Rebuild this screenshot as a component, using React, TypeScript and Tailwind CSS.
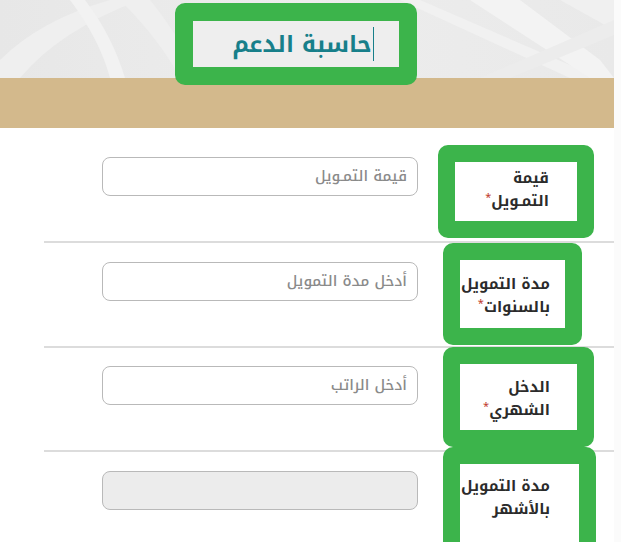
import React from "react";

const font = { fontFamily: '"Noto Kufi Arabic","Noto Sans Arabic","DejaVu Sans",sans-serif' };

function Label({ lines, star, className, pt }: { lines: string[]; star?: boolean; className: string; pt: string }) {
  return (
    <div className={`relative z-10 shrink-0 rounded-[10px] border-[17px] border-[#3cb44b] bg-white ${className}`}>
      <div dir="rtl" className={`flex flex-col text-right text-[15px] font-bold leading-[23px] text-[#2b2b2b] whitespace-nowrap ${pt}`}>
        {lines.map((l, i) => (
          <span key={i}>
            {l}
            {star && i === lines.length - 1 ? <sup className="text-[11px] text-[#c0392b] font-normal">*</sup> : null}
          </span>
        ))}
      </div>
    </div>
  );
}

function Field({ placeholder, disabled, mt }: { placeholder?: string; disabled?: boolean; mt: string }) {
  return (
    <div
      dir="rtl"
      className={`ml-[58px] ${mt} h-[39px] w-[316px] shrink-0 rounded-[8px] border border-[#b9b9b9] ${disabled ? "bg-[#ececec]" : "bg-white"} flex items-center pr-[10px] text-[15px] font-medium text-[#8a8a8a]`}
    >
      {placeholder}
    </div>
  );
}

export default function App() {
  return (
    <div className="w-[621px] h-[542px] overflow-hidden bg-[#fbfbfb]" style={font}>
      <div className="w-[614px] bg-white h-full">
        {/* header */}
        <div className="relative h-[78px] bg-[#e9e9e9] flex justify-start">
          <svg className="absolute inset-0" width="614" height="78" viewBox="0 0 614 78">
            <defs>
              <linearGradient id="g1" x1="0" y1="0" x2="1" y2="0">
                <stop offset="0" stopColor="#e7e7e7" />
                <stop offset="0.5" stopColor="#ededed" />
                <stop offset="1" stopColor="#e9e9e9" />
              </linearGradient>
            </defs>
            <rect width="614" height="78" fill="url(#g1)" />
            <path d="M0 60 Q40 20 110 0 L140 0 Q60 30 20 78 L0 78 Z" fill="#efefef" />
            <path d="M70 0 Q100 40 110 78 L125 78 Q112 35 85 0 Z" fill="#f2f2f2" />
            <path d="M120 0 Q160 40 180 78 L200 78 Q175 30 150 0 Z" fill="#efefef" />
            <path d="M420 0 L600 78 L570 78 L400 0 Z" fill="#f1f1f1" />
            <path d="M470 0 L520 0 L600 60 L614 78 L590 78 Z" fill="#f3f3f3" />
            <path d="M560 0 L614 0 L614 30 Z" fill="#f0f0f0" />
            <path d="M480 78 L614 20 L614 35 L510 78 Z" fill="#ececec" />
          </svg>
          <div className="relative z-10 ml-[175px] mt-[3px] h-[82px] w-[242px] rounded-[10px] border-[18px] border-[#3cb44b] bg-[#eeeeee] flex items-center justify-center">
            <div className="flex items-center pl-[14px]">
              <span dir="rtl" className="text-[23px] font-bold text-[#177f8a] leading-none">حاسبة الدعم</span>
              <span className="ml-[1px] h-[34px] w-[1px] bg-[#177f8a]" />
            </div>
          </div>
        </div>
        <div className="h-[50px] bg-[#d3b98c]" />

        {/* rows */}
        <div className="ml-[44px]">
          <div className="flex items-start h-[115px] border-b-2 border-[#dcdcdc]">
            <Field placeholder="قيمة التمـويل" mt="mt-[29px]" />
            <Label lines={["قيمة", "التمـويل"]} star className="ml-auto mr-[20px] mt-[17px] h-[93px] w-[156px] pr-[28px]" pt="pt-[5px]" />
          </div>
          <div className="flex items-start h-[105px] border-b-2 border-[#dcdcdc]">
            <Field placeholder="أدخل مدة التمويل" mt="mt-[19px]" />
            <Label lines={["مدة التمويل", "بالسنوات"]} star className="ml-auto mr-[32px] mt-0 h-[102px] w-[139px] pr-[15px]" pt="pt-[13px]" />
          </div>
          <div className="flex items-start h-[104px] border-b-2 border-[#dcdcdc]">
            <Field placeholder="أدخل الراتب" mt="mt-[18px]" />
            <Label lines={["الدخل", "الشهري"]} star className="ml-auto mr-[20px] mt-[-1px] h-[100px] w-[151px] pr-[27px]" pt="pt-[12px]" />
          </div>
          <div className="flex items-start h-[100px]">
            <Field disabled mt="mt-[19px]" />
            <Label lines={["مدة التمويل", "بالأشهر"]} className="ml-auto mr-[18px] mt-[-5px] h-[120px] w-[153px] pr-[29px]" pt="pt-[11px]" />
          </div>
        </div>
      </div>
    </div>
  );
}
